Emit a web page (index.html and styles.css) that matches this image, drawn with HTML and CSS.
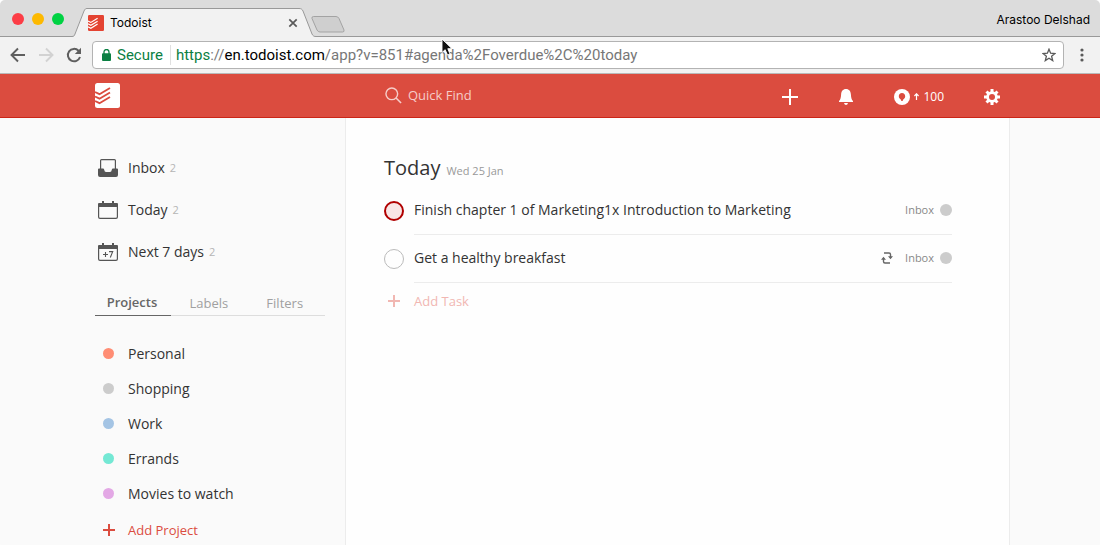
FILE: index.html
```html
<!DOCTYPE html>
<html lang="en">
<head>
<meta charset="utf-8">
<title>Todoist</title>
<link rel="stylesheet" href="styles.css">
</head>
<body>
<div class="window">
  <div class="tab-strip">
    <div class="lights">
      <button class="light light-close" aria-label="Close window"></button>
      <button class="light light-min" aria-label="Minimize window"></button>
      <button class="light light-max" aria-label="Zoom window"></button>
    </div>
    <div class="browser-tab">
      <svg class="tab-shape" viewBox="0 0 244 29" preserveAspectRatio="none" aria-hidden="true">
        <path d="M0 28.500C2 28.500 2.500 27.500 3 26L12 3C13 1 13.500 .5 15 .5H227C229 .5 230 1 231 3L240 26C241 28 242 28.500 244 28.500V29H0z" fill="#f2f2f2"/>
        <path d="M0 28.500C2 28.500 2.500 27.500 3 26L12 3C13 1 13.500 .5 15 .5H227C229 .5 230 1 231 3L240 26C241 28 242 28.500 244 28.500" fill="none" stroke="#999"/>
      </svg>
      <div class="tab-content">
        <svg class="favicon" viewBox="0 0 25 25" aria-hidden="true">
          <rect width="25" height="25" rx="2" fill="#e44332"/>
          <path d="M0 9.300L4.500 11.600L15 5.200M0 13.800L4.500 16.100L15 9.700M0 18.300L4.500 20.600L15 14.200" fill="none" stroke="#fff" stroke-width="1.900"/>
        </svg>
        <span class="tab-title">Todoist</span>
        <button class="tab-close" aria-label="Close tab"><svg width="10" height="10" viewBox="0 0 10 10"><path d="M1.300 1.300L8.700 8.700M8.700 1.300L1.300 8.700" stroke="#5a5a5a" stroke-width="1.700"/></svg></button>
      </div>
    </div>
    <button class="new-tab" aria-label="New tab"><svg width="34" height="17" viewBox="0 0 34 17"><path d="M2.500 .5H25Q27 .5 28 2.500L33 14Q33.500 16 31.500 16H9Q7 16 6 14L1 2.500Q.5 .5 2.500 .5z" fill="#cfcfcf" stroke="#a3a3a3"/></svg></button>
    <button class="profile">Arastoo Delshad</button>
  </div>

  <div class="toolbar">
    <button class="tool" aria-label="Back"><svg width="16" height="16" viewBox="0 0 16 16"><path d="M15 8H2M8 1.500L1.500 8L8 14.500" fill="none" stroke="#5f5f5f" stroke-width="1.900"/></svg></button>
    <button class="tool" aria-label="Forward"><svg width="16" height="16" viewBox="0 0 16 16"><path d="M1 8H14M8 1.500L14.500 8L8 14.500" fill="none" stroke="#d2d2d2" stroke-width="1.900"/></svg></button>
    <button class="tool" aria-label="Reload"><svg width="16" height="16" viewBox="0 0 16 16"><path d="M14 10A6.200 6.200 0 1 1 12.500 3.700L14 5.200" fill="none" stroke="#5f5f5f" stroke-width="2"/><path d="M15 .8V7H8.800z" fill="#5f5f5f"/></svg></button>
    <div class="address">
      <svg class="lock" width="9" height="12" viewBox="0 0 9 12" aria-hidden="true"><rect y="4.300" width="9" height="7.700" rx="1" fill="#0b8043"/><path d="M2 5V3a2.500 2.500 0 0 1 5 0V5" fill="none" stroke="#0b8043" stroke-width="1.300"/></svg>
      <span class="secure">Secure</span>
      <div class="url" role="textbox" aria-label="Address" contenteditable="true" spellcheck="false"><span class="url-scheme">https</span>://<span class="url-host">en.todoist.com</span>/app?v=851#agenda%2Foverdue%2C%20today</div>
      <button class="plain" aria-label="Bookmark"><svg width="14" height="14" viewBox="0 0 14 14"><path d="M7 1.200L8.600 5.200L13 5.500L9.600 8.200L10.700 12.600L7 10.200L3.300 12.600L4.400 8.200L1 5.500L5.400 5.200z" fill="none" stroke="#5a5a5a" stroke-width="1.300"/></svg></button>
    </div>
    <button class="plain menu" aria-label="Menu"><svg width="4" height="14" viewBox="0 0 4 14" fill="#5a5a5a"><circle cx="2" cy="2" r="1.600"/><circle cx="2" cy="7" r="1.600"/><circle cx="2" cy="12" r="1.600"/></svg></button>
    <svg class="pointer" width="14" height="19" viewBox="0 0 14 19" aria-hidden="true"><path d="M1 1V14.500L4.200 11.700L6.500 17L9 16L6.800 10.700H11z" fill="#111" stroke="#fff" stroke-width=".9"/></svg>
  </div>

  <header class="top-bar">
    <a class="logo" href="#" aria-label="Todoist"><svg width="25" height="25" viewBox="0 0 25 25"><rect width="25" height="25" rx="2.500" fill="#fff"/><path d="M0 9L4.500 11.200L15 5M0 13.500L4.500 15.700L15 9.500M0 18L4.500 20.200L15 14" fill="none" stroke="#db4c3f" stroke-width="1.900"/></svg></a>
    <label class="search">
      <svg width="17" height="17" viewBox="0 0 18 18" aria-hidden="true"><circle cx="7.200" cy="7.200" r="6.200" fill="none" stroke="#f6cdc9" stroke-width="1.500"/><path d="M11.700 11.700L17 17" stroke="#f6cdc9" stroke-width="1.700"/></svg>
      <input class="search-input" type="text" placeholder="Quick Find" aria-label="Quick Find">
    </label>
    <nav class="actions">
      <button class="plain" aria-label="Add task"><svg width="16" height="16" viewBox="0 0 16 16"><path d="M8 0V16M0 8H16" stroke="#fff" stroke-width="2"/></svg></button>
      <button class="plain" aria-label="Notifications"><svg width="14" height="16" viewBox="0 0 14 16" fill="#fff"><path d="M7 0C10.200 0 11.700 2.300 11.900 5.500C12.100 9 12.600 10.700 14 12V13H0V12C1.400 10.700 1.900 9 2.100 5.500C2.300 2.300 3.800 0 7 0zM5 14H9Q8.500 16 7 16Q5.500 16 5 14z"/></svg></button>
      <button class="plain karma" aria-label="Karma 100"><svg width="16" height="16" viewBox="0 0 16 16"><circle cx="8" cy="8" r="8" fill="#fff"/><path d="M8 4C10 4 11.200 5.400 11.200 7.200C11.200 9 10 9.800 9.200 10.600L8.600 12H7.400L6.800 10.600C6 9.800 4.800 9 4.800 7.200C4.800 5.400 6 4 8 4z" fill="#db4c3f"/></svg><svg class="karma-arrow" width="5" height="7" viewBox="0 0 5 7"><path d="M2.500 7V1M.4 3L2.500 .8L4.600 3" fill="none" stroke="#fff" stroke-width="1.200"/></svg><span>100</span></button>
      <button class="plain" aria-label="Settings"><svg width="16" height="16" viewBox="0 0 16 16"><g stroke="#fff" stroke-width="3"><path d="M8 0V16M0 8H16M2.500 2.500L13.500 13.500M13.500 2.500L2.500 13.500"/></g><circle cx="8" cy="8" r="5.800" fill="#fff"/><circle cx="8" cy="8" r="3" fill="#db4c3f"/></svg></button>
    </nav>
  </header>

  <div class="page">
    <aside class="sidebar">
      <nav class="views">
        <a class="view" href="#"><svg width="20" height="18" viewBox="0 0 20 18"><path d="M2.600 10V1.500Q2.600 .6 3.500 .6H16.500Q17.400 .6 17.400 1.500V10" fill="none" stroke="#555" stroke-width="1.200"/><path d="M0 10.500Q0 9.500 1 9.500H5Q6 9.500 6.200 10.700Q6.500 13 8 13H12Q13.500 13 13.800 10.700Q14 9.500 15 9.500H19Q20 9.500 20 10.500V16Q20 18 18 18H2Q0 18 0 16z" fill="#555"/></svg><span>Inbox</span><small class="count">2</small></a>
        <a class="view" href="#"><svg width="20" height="18" viewBox="0 0 20 18"><path d="M0 3Q0 2 1 2H4V0H6V2H14V0H16V2H19Q20 2 20 3V6H0z" fill="#555"/><path d="M.6 5V16Q.6 17.400 2 17.400H18Q19.400 17.400 19.400 16V5" fill="none" stroke="#555" stroke-width="1.200"/></svg><span>Today</span><small class="count">2</small></a>
        <a class="view" href="#"><svg width="20" height="18" viewBox="0 0 20 18"><path d="M0 3Q0 2 1 2H4V0H6V2H14V0H16V2H19Q20 2 20 3V6H0z" fill="#555"/><path d="M.6 5V16Q.6 17.400 2 17.400H18Q19.400 17.400 19.400 16V5" fill="none" stroke="#555" stroke-width="1.200"/><path d="M5 11.500H10M7.500 9V14M11 8.600H14.700L12.300 14.500" fill="none" stroke="#555" stroke-width="1.100"/></svg><span>Next 7 days</span><small class="count">2</small></a>
      </nav>
      <div class="tabs" role="tablist">
        <button class="tab tab-active" role="tab" aria-selected="true">Projects</button>
        <button class="tab" role="tab" aria-selected="false">Labels</button>
        <button class="tab" role="tab" aria-selected="false">Filters</button>
      </div>
      <ul class="projects">
        <li><a class="project" href="#"><i class="dot coral"></i>Personal</a></li>
        <li><a class="project" href="#"><i class="dot gray"></i>Shopping</a></li>
        <li><a class="project" href="#"><i class="dot blue"></i>Work</a></li>
        <li><a class="project" href="#"><i class="dot teal"></i>Errands</a></li>
        <li><a class="project" href="#"><i class="dot violet"></i>Movies to watch</a></li>
      </ul>
      <button class="add-project"><svg width="12" height="12" viewBox="0 0 12 12"><path d="M6 0V12M0 6H12" stroke="currentColor" stroke-width="2"/></svg>Add Project</button>
    </aside>

    <main class="agenda">
      <h1 class="heading">Today<small class="date">Wed 25 Jan</small></h1>
      <ul class="tasks">
        <li class="task">
          <input class="check check-urgent" type="checkbox" id="task-1">
          <div class="task-body"><label class="task-name" for="task-1">Finish chapter 1 of Marketing1x Introduction to Marketing</label><a class="task-project" href="#">Inbox<i class="badge"></i></a></div>
        </li>
        <li class="task">
          <input class="check" type="checkbox" id="task-2">
          <div class="task-body"><label class="task-name" for="task-2">Get a healthy breakfast</label><svg class="repeat" width="12" height="12" viewBox="0 0 12 12" aria-hidden="true"><path d="M3 1H8Q9.500 1 9.500 2.500V6M9 11H4Q2.500 11 2.500 9.500V6" fill="none" stroke="#666" stroke-width="1.400"/><path d="M7 4.300H12L9.500 7.300zM0 7.700H5L2.500 4.700z" fill="#666"/></svg><a class="task-project" href="#">Inbox<i class="badge"></i></a></div>
        </li>
      </ul>
      <button class="add-task"><svg width="12" height="12" viewBox="0 0 12 12"><path d="M6 0V12M0 6H12" stroke="currentColor" stroke-width="2"/></svg>Add Task</button>
    </main>
  </div>
</div>
</body>
</html>
```
FILE: styles.css
```css
* { box-sizing: border-box; }

body {
  margin: 0;
  background: #fff;
  color: #333;
  font: 14px/20px "Open Sans", "Noto Sans", sans-serif;
}

button {
  padding: 0;
  border: 0;
  background: none;
  color: inherit;
  font: inherit;
}

a { color: inherit; text-decoration: none; }
ul { margin: 0; padding: 0; list-style: none; }
svg { display: block; flex: none; }
.plain { display: flex; align-items: center; }

.window {
  display: flex;
  flex-direction: column;
  min-height: 100vh;
  overflow: hidden;
  border-radius: 5px;
  background: #fafafa;
}

/* Browser tab strip */
.tab-strip {
  display: flex;
  align-items: flex-end;
  height: 37px;
  padding-right: 10px;
  background: linear-gradient(#999, #999) bottom / 100% 1px no-repeat #dcdcdc;
  color: #000;
  font: 12px/16px Inter, Roboto, sans-serif;
}

.lights { display: flex; gap: 8px; padding: 0 0 12px 12px; }
.light { width: 12px; height: 12px; border-radius: 50%; }
.light-close { background: #fc3d46; }
.light-min { background: #fdb900; }
.light-max { background: #00d243; }

.browser-tab { display: grid; width: 244px; height: 29px; margin-left: 8px; }
.tab-shape, .tab-content { grid-area: 1 / 1; width: 100%; height: 29px; }
.tab-content { display: flex; align-items: center; padding: 0 18px 0 16px; }
.favicon { width: 16px; height: 16px; }
.tab-title { flex: 1; margin-left: 6px; }
.new-tab { margin: 0 0 4px -5px; }
.profile { margin: 0 0 9px auto; }

/* Browser toolbar */
.toolbar {
  position: relative;
  display: flex;
  align-items: center;
  height: 37px;
  padding: 0 16px 0 10px;
  border-bottom: 1px solid #b9b9b9;
  background: #f2f2f2;
}

.tool { margin-right: 12px; }

.address {
  display: flex;
  flex: 1;
  align-items: center;
  height: 28px;
  margin: 0 16px 0 -2px;
  padding: 0 7px 0 9px;
  border: 1px solid #b3b3b3;
  border-radius: 4px;
  background: #fff;
  color: #777;
  font: 15px/20px Roboto, sans-serif;
}

.secure {
  margin-left: 6px;
  padding-right: 7px;
  border-right: 1px solid #e0e0e0;
  color: #0b8043;
}

.url { flex: 1; padding-left: 5px; white-space: nowrap; }
.url-scheme { color: #0b8043; }
.url-host { color: #000; }
.pointer { position: absolute; top: 1px; left: 441px; }

/* App header */
.top-bar {
  display: flex;
  align-items: center;
  height: 44px;
  padding: 0 100px 0 95px;
  border-bottom: 1px solid #cb2517;
  background: #db4c3f;
  color: #fff;
}

.search { display: flex; flex: 1; align-items: center; gap: 6px; margin: 0 0 1px 265px; }

.search-input {
  width: 100%;
  padding: 0;
  border: 0;
  outline: 0;
  background: none;
  color: #fff;
  font: 13px/20px "Open Sans", "Noto Sans", sans-serif;
}

.search-input::placeholder { color: #f6cdc9; opacity: 1; }
.actions { display: flex; align-items: center; gap: 41px; padding-top: 2px; }
.karma { margin-right: -1px; font-size: 12px; }
.karma-arrow { margin: 0 4px; }

/* Page columns */
.page { display: flex; flex: 1; padding: 0 90px 0 95px; }

.sidebar { width: 250px; padding: 29px 20px 0 0; }
.view { display: flex; align-items: center; height: 42px; padding-left: 3px; }
.view span { margin-left: 10px; }
.count { margin-left: 5px; color: #b5b5b5; font-size: 11px; }

.tabs {
  display: flex;
  margin: 16px 0 20px;
  border-bottom: 1px solid #ddd;
  color: #a0a0a0;
  font-size: 13px;
}

.tab { width: 33%; height: 27px; margin-bottom: -1px; }
.tab-active { padding-right: 2px; border-bottom: 1px solid #666; color: #666; font-weight: 600; }

.project { display: flex; align-items: center; height: 35px; padding-left: 8px; }
.dot { width: 11px; height: 11px; margin-right: 14px; border-radius: 50%; }
.coral { background: #ff8d74; }
.gray { background: #ccc; }
.blue { background: #a4c4e4; }
.teal { background: #74e8d4; }
.violet { background: #e3a8e5; }

.add-project {
  display: flex;
  align-items: center;
  gap: 13px;
  height: 37px;
  padding-left: 8px;
  color: #db4c3f;
  font-size: 13px;
}

/* Agenda */
.agenda {
  flex: 1;
  padding: 36px 57px 0 38px;
  border: solid #ececec;
  border-width: 0 1px;
  background: #fefefe;
}

.heading { margin: 0; font-size: 20px; font-weight: 400; line-height: 28px; }
.date { margin-left: 6px; color: #999; font-size: 11px; }
.tasks { padding-top: 2px; }
.task { display: flex; gap: 10px; height: 48px; }

.check {
  flex: none;
  width: 20px;
  height: 20px;
  margin: 14px 0 0;
  border: 1px solid #bbb;
  border-radius: 50%;
  appearance: none;
}

.check-urgent { border: 2px solid #b00000; background: #f8e6e6; }
.task-body { display: flex; flex: 1; align-items: center; padding-bottom: 2px; border-bottom: 1px solid #ececec; }
.task-name { flex: 1; }
.repeat { margin-right: 12px; }
.task-project { display: flex; align-items: center; gap: 6px; color: #888; font-size: 11px; }
.badge { width: 12px; height: 12px; border-radius: 50%; background: #ccc; }

.add-task {
  display: flex;
  align-items: center;
  gap: 14px;
  height: 36px;
  padding-left: 4px;
  color: #f1b7b2;
  font-size: 13px;
}
```
